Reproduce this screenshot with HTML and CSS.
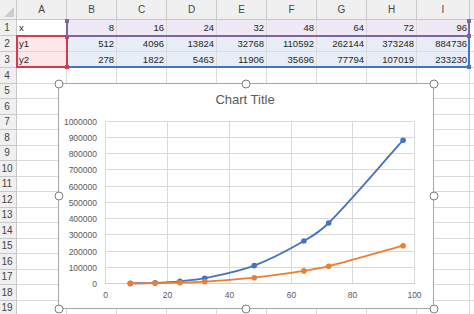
FILE: index.html
```html
<!DOCTYPE html>
<html lang="en">
<head>
    <meta charset="UTF-8">
    <meta name="viewport" content="width=device-width, initial-scale=1.0">
    <title>Libro1 - Chart</title>
    <link rel="stylesheet" href="styles.css">
</head>
<body>
    <div class="workbook">
        <div class="sheet">
            <!-- column headers -->
            <div class="head corner"><span class="select-all"></span></div>
            <div class="head">A</div>
            <div class="head">B</div>
            <div class="head">C</div>
            <div class="head">D</div>
            <div class="head">E</div>
            <div class="head">F</div>
            <div class="head">G</div>
            <div class="head">H</div>
            <div class="head">I</div>
            <div class="head"></div>

            <!-- data rows -->
            <div class="head rh">1</div>
            <div class="cell">x</div>
            <div class="cell num tint-x">8</div>
            <div class="cell num tint-x">16</div>
            <div class="cell num tint-x">24</div>
            <div class="cell num tint-x">32</div>
            <div class="cell num tint-x">48</div>
            <div class="cell num tint-x">64</div>
            <div class="cell num tint-x">72</div>
            <div class="cell num tint-x">96</div>
            <div class="cell"></div>

            <div class="head rh">2</div>
            <div class="cell tint-name">y1</div>
            <div class="cell num tint-y">512</div>
            <div class="cell num tint-y">4096</div>
            <div class="cell num tint-y">13824</div>
            <div class="cell num tint-y">32768</div>
            <div class="cell num tint-y">110592</div>
            <div class="cell num tint-y">262144</div>
            <div class="cell num tint-y">373248</div>
            <div class="cell num tint-y">884736</div>
            <div class="cell"></div>

            <div class="head rh">3</div>
            <div class="cell tint-name">y2</div>
            <div class="cell num tint-y">278</div>
            <div class="cell num tint-y">1822</div>
            <div class="cell num tint-y">5463</div>
            <div class="cell num tint-y">11906</div>
            <div class="cell num tint-y">35696</div>
            <div class="cell num tint-y">77794</div>
            <div class="cell num tint-y">107019</div>
            <div class="cell num tint-y">233230</div>
            <div class="cell"></div>

            <!-- empty rows -->
            <div class="head rh">4</div><div class="cell"></div><div class="cell"></div><div class="cell"></div><div class="cell"></div><div class="cell"></div><div class="cell"></div><div class="cell"></div><div class="cell"></div><div class="cell"></div><div class="cell"></div>
            <div class="head rh">5</div><div class="cell"></div><div class="cell"></div><div class="cell"></div><div class="cell"></div><div class="cell"></div><div class="cell"></div><div class="cell"></div><div class="cell"></div><div class="cell"></div><div class="cell"></div>
            <div class="head rh">6</div><div class="cell"></div><div class="cell"></div><div class="cell"></div><div class="cell"></div><div class="cell"></div><div class="cell"></div><div class="cell"></div><div class="cell"></div><div class="cell"></div><div class="cell"></div>
            <div class="head rh">7</div><div class="cell"></div><div class="cell"></div><div class="cell"></div><div class="cell"></div><div class="cell"></div><div class="cell"></div><div class="cell"></div><div class="cell"></div><div class="cell"></div><div class="cell"></div>
            <div class="head rh">8</div><div class="cell"></div><div class="cell"></div><div class="cell"></div><div class="cell"></div><div class="cell"></div><div class="cell"></div><div class="cell"></div><div class="cell"></div><div class="cell"></div><div class="cell"></div>
            <div class="head rh">9</div><div class="cell"></div><div class="cell"></div><div class="cell"></div><div class="cell"></div><div class="cell"></div><div class="cell"></div><div class="cell"></div><div class="cell"></div><div class="cell"></div><div class="cell"></div>
            <div class="head rh">10</div><div class="cell"></div><div class="cell"></div><div class="cell"></div><div class="cell"></div><div class="cell"></div><div class="cell"></div><div class="cell"></div><div class="cell"></div><div class="cell"></div><div class="cell"></div>
            <div class="head rh">11</div><div class="cell"></div><div class="cell"></div><div class="cell"></div><div class="cell"></div><div class="cell"></div><div class="cell"></div><div class="cell"></div><div class="cell"></div><div class="cell"></div><div class="cell"></div>
            <div class="head rh">12</div><div class="cell"></div><div class="cell"></div><div class="cell"></div><div class="cell"></div><div class="cell"></div><div class="cell"></div><div class="cell"></div><div class="cell"></div><div class="cell"></div><div class="cell"></div>
            <div class="head rh">13</div><div class="cell"></div><div class="cell"></div><div class="cell"></div><div class="cell"></div><div class="cell"></div><div class="cell"></div><div class="cell"></div><div class="cell"></div><div class="cell"></div><div class="cell"></div>
            <div class="head rh">14</div><div class="cell"></div><div class="cell"></div><div class="cell"></div><div class="cell"></div><div class="cell"></div><div class="cell"></div><div class="cell"></div><div class="cell"></div><div class="cell"></div><div class="cell"></div>
            <div class="head rh">15</div><div class="cell"></div><div class="cell"></div><div class="cell"></div><div class="cell"></div><div class="cell"></div><div class="cell"></div><div class="cell"></div><div class="cell"></div><div class="cell"></div><div class="cell"></div>
            <div class="head rh">16</div><div class="cell"></div><div class="cell"></div><div class="cell"></div><div class="cell"></div><div class="cell"></div><div class="cell"></div><div class="cell"></div><div class="cell"></div><div class="cell"></div><div class="cell"></div>
            <div class="head rh">17</div><div class="cell"></div><div class="cell"></div><div class="cell"></div><div class="cell"></div><div class="cell"></div><div class="cell"></div><div class="cell"></div><div class="cell"></div><div class="cell"></div><div class="cell"></div>
            <div class="head rh">18</div><div class="cell"></div><div class="cell"></div><div class="cell"></div><div class="cell"></div><div class="cell"></div><div class="cell"></div><div class="cell"></div><div class="cell"></div><div class="cell"></div><div class="cell"></div>
            <div class="head rh">19</div><div class="cell"></div><div class="cell"></div><div class="cell"></div><div class="cell"></div><div class="cell"></div><div class="cell"></div><div class="cell"></div><div class="cell"></div><div class="cell"></div><div class="cell"></div>
        </div>

        <!-- source data ranges of the selected chart -->
        <div class="range range-y"><span class="grip br"></span></div>
        <div class="range range-name"><span class="grip tr"></span><span class="grip br"></span></div>
        <div class="range range-x"><span class="grip tl"></span><span class="grip tr"></span><span class="grip br"></span></div>

        <!-- chart object -->
        <div class="chart">
            <div class="chart-title">Chart Title</div>
            <svg class="plot" width="374" height="194" viewBox="0 0 374 194">
                <g class="grid">
                    <line x1="46.5" y1="7.5" x2="355.5" y2="7.5"/>
                    <line x1="46.5" y1="23.5" x2="355.5" y2="23.5"/>
                    <line x1="46.5" y1="39.5" x2="355.5" y2="39.5"/>
                    <line x1="46.5" y1="55.5" x2="355.5" y2="55.5"/>
                    <line x1="46.5" y1="72.5" x2="355.5" y2="72.5"/>
                    <line x1="46.5" y1="88.5" x2="355.5" y2="88.5"/>
                    <line x1="46.5" y1="104.5" x2="355.5" y2="104.5"/>
                    <line x1="46.5" y1="120.5" x2="355.5" y2="120.5"/>
                    <line x1="46.5" y1="137.5" x2="355.5" y2="137.5"/>
                    <line x1="46.5" y1="153.5" x2="355.5" y2="153.5"/>
                    <line x1="46.5" y1="7.5" x2="46.5" y2="169.5"/>
                    <line x1="108.5" y1="7.5" x2="108.5" y2="169.5"/>
                    <line x1="170.5" y1="7.5" x2="170.5" y2="169.5"/>
                    <line x1="232.5" y1="7.5" x2="232.5" y2="169.5"/>
                    <line x1="293.5" y1="7.5" x2="293.5" y2="169.5"/>
                    <line x1="355.5" y1="7.5" x2="355.5" y2="169.5"/>
                </g>
                <line class="axis" x1="46.5" y1="169.5" x2="355.5" y2="169.5"/>

                <g class="ticks y-ticks">
                    <text x="38" y="10.5">1000000</text>
                    <text x="38" y="26.5">900000</text>
                    <text x="38" y="42.5">800000</text>
                    <text x="38" y="58.5">700000</text>
                    <text x="38" y="75.5">600000</text>
                    <text x="38" y="91.5">500000</text>
                    <text x="38" y="107.5">400000</text>
                    <text x="38" y="123.5">300000</text>
                    <text x="38" y="140.5">200000</text>
                    <text x="38" y="156.5">100000</text>
                    <text x="38" y="172.5">0</text>
                </g>
                <g class="ticks x-ticks">
                    <text x="46.5" y="184">0</text>
                    <text x="108.5" y="184">20</text>
                    <text x="170.5" y="184">40</text>
                    <text x="232.5" y="184">60</text>
                    <text x="293.5" y="184">80</text>
                    <text x="355.5" y="184">100</text>
                </g>

                <!-- y1 -->
                <g class="series s1">
                    <path d="M71.3 169.4 C79.6 169.2 87.8 169.2 96.1 168.8 C104.4 168.5 112.6 168.1 120.9 167.3 C129.2 166.5 137.4 165.9 145.7 164.2 C162.2 160.7 178.8 157.8 195.3 151.6 C211.8 145.4 228.4 136.5 244.9 127 C253.2 122.3 261.4 117.4 269.7 109 C294.5 83.8 319.3 53.8 344.1 26.2"/>
                    <circle cx="71.3" cy="169.4" r="2.8"/>
                    <circle cx="96.1" cy="168.8" r="2.8"/>
                    <circle cx="120.9" cy="167.3" r="2.8"/>
                    <circle cx="145.7" cy="164.2" r="2.8"/>
                    <circle cx="195.3" cy="151.6" r="2.8"/>
                    <circle cx="244.9" cy="127" r="2.8"/>
                    <circle cx="269.7" cy="109" r="2.8"/>
                    <circle cx="344.1" cy="26.2" r="2.8"/>
                </g>
                <!-- y2 -->
                <g class="series s2">
                    <path d="M71.3 169.45 C79.6 169.37 87.8 169.34 96.1 169.2 C104.4 169.06 112.6 168.87 120.9 168.6 C129.2 168.33 137.4 168.15 145.7 167.6 C162.2 166.51 178.8 165.48 195.3 163.7 C211.8 161.92 228.4 159.46 244.9 156.9 C253.2 155.62 261.4 154.3 269.7 152.2 C294.5 145.9 319.3 138.53 344.1 131.7"/>
                    <circle cx="71.3" cy="169.45" r="2.8"/>
                    <circle cx="96.1" cy="169.2" r="2.8"/>
                    <circle cx="120.9" cy="168.6" r="2.8"/>
                    <circle cx="145.7" cy="167.6" r="2.8"/>
                    <circle cx="195.3" cy="163.7" r="2.8"/>
                    <circle cx="244.9" cy="156.9" r="2.8"/>
                    <circle cx="269.7" cy="152.2" r="2.8"/>
                    <circle cx="344.1" cy="131.7" r="2.8"/>
                </g>
            </svg>

            <!-- selection handles -->
            <span class="knob k-tl"></span>
            <span class="knob k-tm"></span>
            <span class="knob k-tr"></span>
            <span class="knob k-ml"></span>
            <span class="knob k-mr"></span>
            <span class="knob k-bl"></span>
            <span class="knob k-bm"></span>
            <span class="knob k-br"></span>
        </div>
    </div>
</body>
</html>
```

FILE: styles.css
```css
* {
    box-sizing: border-box;
}

body {
    margin: 0;
    font-family: "Liberation Sans", Arial, sans-serif;
    background: #fff;
    overflow: hidden;
}

.workbook {
    position: relative;
    width: 474px;
    height: 314px;
    overflow: hidden;
}

/* grid of cells */
.sheet {
    display: grid;
    grid-template-columns: 17px repeat(8, 50px) 53px 1fr;
    grid-template-rows: 20px repeat(3, 16px) repeat(16, 15.5px);
    font-size: 9.5px;
    color: #1e1e1e;
}

.cell {
    display: flex;
    align-items: center;
    padding: 0 2px;
    border-right: 1px solid #dadada;
    border-bottom: 1px solid #dadada;
    white-space: nowrap;
    overflow: hidden;
}

.cell.num {
    justify-content: flex-end;
}

.head {
    display: flex;
    align-items: center;
    justify-content: center;
    background: #f0f0f0;
    color: #444;
    font-size: 10px;
    border-right: 1px solid #c8c8c8;
    border-bottom: 1px solid #c8c8c8;
}

.head.rh {
    padding-right: 2px;
}

.head.corner {
    align-items: flex-end;
    justify-content: flex-end;
    padding: 0 2px 2px 0;
}

.select-all {
    width: 0;
    height: 0;
    border-left: 10px solid transparent;
    border-bottom: 10px solid #cdcdcd;
}

.tint-x {
    background: #eee9f4;
}

.tint-name {
    background: #fce8e9;
}

.tint-y {
    background: #e8eef8;
}

/* chart source ranges */
.range {
    position: absolute;
    border: 2px solid;
    pointer-events: none;
}

.range-y {
    left: 66px;
    top: 35px;
    width: 404px;
    height: 33px;
    border-color: #4472c4;
}

.range-name {
    left: 16px;
    top: 35px;
    width: 52px;
    height: 33px;
    border-color: #d9394f;
}

.range-x {
    left: 66px;
    top: 20px;
    width: 404px;
    height: 17px;
    border-color: #8064a2;
    border-top: none;
}

.grip {
    position: absolute;
    width: 4px;
    height: 4px;
    background: inherit;
}

.range-y .grip { background: #4472c4; }
.range-name .grip { background: #d9394f; }
.range-x .grip { background: #8064a2; }

.grip.tl { left: -3px; top: -1px; }
.grip.tr { right: -3px; top: -2px; }
.grip.br { right: -3px; bottom: -3px; }
.range-x .grip.tr { top: -1px; }

/* chart */
.chart {
    position: absolute;
    left: 58px;
    top: 83px;
    width: 376px;
    height: 226px;
    border: 1px solid #a6a6a6;
    background: #fff;
}

.chart-title {
    height: 30px;
    padding-top: 8px;
    padding-right: 2px;
    line-height: 16px;
    font-size: 13px;
    color: #595959;
    text-align: center;
}

.plot {
    display: block;
}

.grid line {
    stroke: #d9d9d9;
    stroke-width: 1;
}

.axis {
    stroke: #d0d0d0;
    stroke-width: 1;
}

.ticks text {
    font-family: "Liberation Sans", Arial, sans-serif;
    font-size: 8.5px;
    fill: #595959;
}

.y-ticks text {
    text-anchor: end;
}

.x-ticks text {
    text-anchor: middle;
}

.series path {
    fill: none;
    stroke-width: 1.8;
    stroke-linecap: round;
}

.s1 path { stroke: #4472c4; }
.s1 circle { fill: #4472c4; }
.s2 path { stroke: #ed7d31; }
.s2 circle { fill: #ed7d31; }

.knob {
    position: absolute;
    width: 9px;
    height: 9px;
    border: 1px solid #7f7f7f;
    border-radius: 50%;
    background: #fff;
    transform: translate(-50%, -50%);
}

.k-tl { left: -0.5px; top: -0.5px; }
.k-tm { left: calc(50% - 0.5px); top: -0.5px; }
.k-tr { left: calc(100% + 0.5px); top: -0.5px; }
.k-ml { left: -0.5px; top: calc(50% - 0.5px); }
.k-mr { left: calc(100% + 0.5px); top: calc(50% - 0.5px); }
.k-bl { left: -0.5px; top: calc(100% + 0.5px); }
.k-bm { left: calc(50% - 0.5px); top: calc(100% + 0.5px); }
.k-br { left: calc(100% + 0.5px); top: calc(100% + 0.5px); }
```
